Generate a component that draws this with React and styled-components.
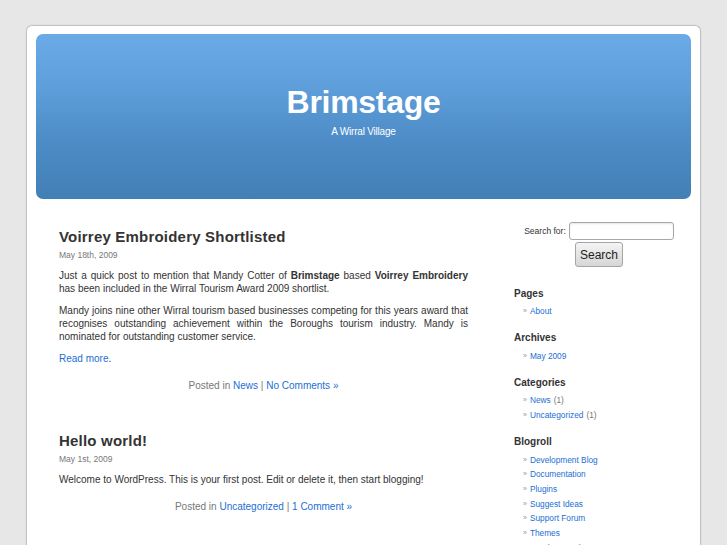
import React from "react";
import styled, { createGlobalStyle } from "styled-components";

const Global = createGlobalStyle`
  html, body { margin: 0; padding: 0; }
  body {
    background: #e7e7e7;
    font-family: "Liberation Sans", Arial, sans-serif;
    color: #333;
  }
  a { color: #1a6fd3; text-decoration: none; }
`;

const Page = styled.div`
  box-sizing: border-box;
  width: 675px;
  margin: 25px auto 0;
  background: #fff;
  border: 1px solid #c2c2c2;
  border-bottom: none;
  border-radius: 6px 6px 0 0;
  box-shadow: 0 0 2px rgba(0,0,0,0.08);
  padding: 8px 9px 0 9px;
  min-height: 530px;
`;

const Header = styled.header`
  height: 165px;
  border-radius: 7px;
  background: linear-gradient(to bottom, #6aaae7 0%, #5f9fdb 30%, #4d8cc6 65%, #427fb5 100%);
  display: flex;
  flex-direction: column;
  align-items: center;
  padding-top: 50px;
  box-sizing: border-box;
  color: #fff;
`;

const SiteTitle = styled.h1`
  margin: 0;
  font-size: 32px;
  line-height: 36px;
  font-weight: bold;
  letter-spacing: -0.3px;
`;

const Tagline = styled.div`
  margin-top: 6px;
  font-size: 10px;
  line-height: 12px;
  letter-spacing: -0.2px;
`;

const Body = styled.div`
  display: flex;
  padding-top: 28px;
`;

const Main = styled.main`
  width: 409px;
  margin-left: 23px;
`;

const Post = styled.article`
  margin-bottom: 39px;
`;

const PostTitle = styled.h2`
  margin: 0;
  font-size: 15px;
  line-height: 20px;
  font-weight: bold;
  color: #333;
  letter-spacing: 0.2px;
`;

const PostDate = styled.div`
  margin-top: 1.5px;
  font-size: 8.5px;
  line-height: 12px;
  color: #777;
`;

const Entry = styled.div`
  margin-top: 8.5px;
  font-size: 10px;
  line-height: 13px;
  text-align: justify;
  color: #333;
`;

const Para = styled.p`
  margin: 0 0 9px;
  &:last-child { margin-bottom: 0; }
`;

const PostMeta = styled.div`
  margin-top: 14px;
  text-align: center;
  font-size: 10px;
  line-height: 13px;
  color: #777;
`;

const Sidebar = styled.aside`
  width: 170px;
  margin-left: 46px;
  margin-top: -5px;
`;

const SearchRow = styled.div`
  display: flex;
  justify-content: center;
  align-items: center;
  gap: 3px;
`;

const SearchLabel = styled.label`
  font-size: 8.5px;
  color: #333;
`;

const SearchInput = styled.input`
  box-sizing: border-box;
  width: 105px;
  height: 18px;
  border: 1px solid #a8a8a8;
  border-radius: 3px;
  box-shadow: inset 0 1px 2px rgba(0,0,0,0.1);
  padding: 0 3px;
  outline: none;
`;

const SearchButton = styled.button`
  box-sizing: border-box;
  margin-top: 2px;
  width: 48px;
  height: 25px;
  padding: 0;
  font-family: "Liberation Sans", Arial, sans-serif;
  font-size: 12px;
  color: #222;
  border: 1px solid #a5a5a5;
  border-radius: 3px;
  background: linear-gradient(to bottom, #f4f4f4, #d6d6d6);
`;

const Widget = styled.section`
  margin-top: ${(p) => p.$top ?? 12.5}px;
`;

const WidgetTitle = styled.h2`
  margin: 0 0 4.5px;
  font-size: 10px;
  line-height: 13px;
  font-weight: bold;
  color: #333;
`;

const List = styled.ul`
  list-style: none;
  margin: 0;
  padding: 0 0 0 9px;
`;

const Item = styled.li`
  font-size: 8.3px;
  line-height: 14.67px;
  display: flex;
  gap: 3px;
  &::before {
    content: "»";
    color: #999;
    font-size: 7px;
  }
`;

const Count = styled.span`
  color: #777;
  margin-left: 3px;
`;

const widgets = [
  { title: "Pages", items: [{ t: "About" }] },
  { title: "Archives", items: [{ t: "May 2009" }] },
  { title: "Categories", items: [{ t: "News", c: "(1)" }, { t: "Uncategorized", c: "(1)" }] },
  {
    title: "Blogroll",
    items: [
      { t: "Development Blog" },
      { t: "Documentation" },
      { t: "Plugins" },
      { t: "Suggest Ideas" },
      { t: "Support Forum" },
      { t: "Themes" },
      { t: "WordPress Planet" },
    ],
  },
];

export default function App() {
  return (
    <>
      <Global />
      <Page>
        <Header>
          <SiteTitle>Brimstage</SiteTitle>
          <Tagline>A Wirral Village</Tagline>
        </Header>
        <Body>
          <Main>
            <Post>
              <PostTitle>Voirrey Embroidery Shortlisted</PostTitle>
              <PostDate>May 18th, 2009</PostDate>
              <Entry>
                <Para>
                  Just a quick post to mention that Mandy Cotter of <b>Brimstage</b> based{" "}
                  <b>Voirrey Embroidery</b> has been included in the Wirral Tourism Award 2009 shortlist.
                </Para>
                <Para>
                  Mandy joins nine other Wirral tourism based businesses competing for this years award
                  that recognises outstanding achievement within the Boroughs tourism industry. Mandy is
                  nominated for outstanding customer service.
                </Para>
                <Para>
                  <a href="#">Read more</a>.
                </Para>
              </Entry>
              <PostMeta>
                Posted in <a href="#">News</a> | <a href="#">No Comments »</a>
              </PostMeta>
            </Post>
            <Post>
              <PostTitle>Hello world!</PostTitle>
              <PostDate>May 1st, 2009</PostDate>
              <Entry>
                <Para>
                  Welcome to WordPress. This is your first post. Edit or delete it, then start blogging!
                </Para>
              </Entry>
              <PostMeta>
                Posted in <a href="#">Uncategorized</a> | <a href="#">1 Comment »</a>
              </PostMeta>
            </Post>
          </Main>
          <Sidebar>
            <SearchRow>
              <SearchLabel>Search for:</SearchLabel>
              <SearchInput type="text" />
            </SearchRow>
            <SearchRow>
              <SearchButton>Search</SearchButton>
            </SearchRow>
            {widgets.map((w, i) => (
              <Widget key={w.title} $top={i === 0 ? 19.5 : 12.5}>
                <WidgetTitle>{w.title}</WidgetTitle>
                <List>
                  {w.items.map((it) => (
                    <Item key={it.t}>
                      <span>
                        <a href="#">{it.t}</a>
                        {it.c && <Count>{it.c}</Count>}
                      </span>
                    </Item>
                  ))}
                </List>
              </Widget>
            ))}
          </Sidebar>
        </Body>
      </Page>
    </>
  );
}
